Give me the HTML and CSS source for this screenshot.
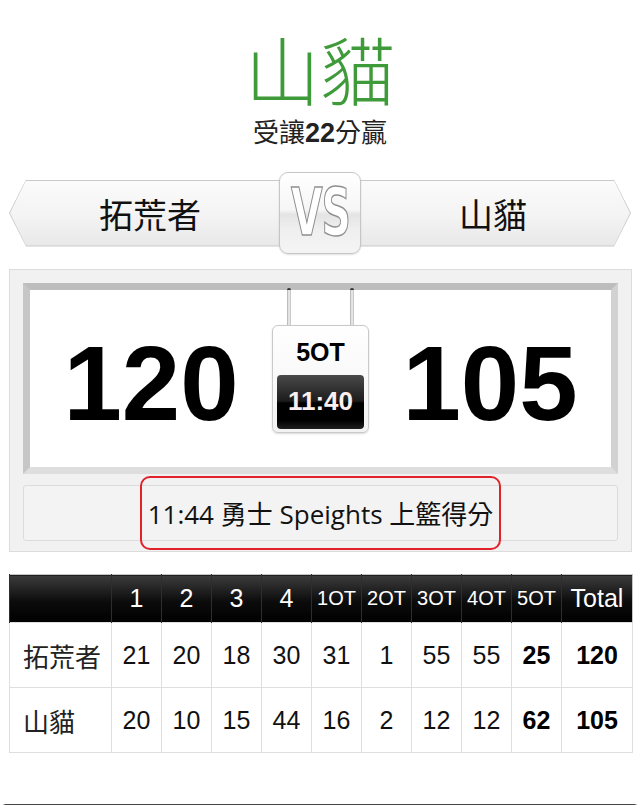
FILE: index.html
```html
<!DOCTYPE html>
<html lang="zh-tw">
<head>
    <meta charset="utf-8">
    <meta name="viewport" content="width=device-width, initial-scale=1.0">
    <title>拓荒者 vs 山貓</title>
    <link rel="stylesheet" href="styles.css">
</head>
<body>
    <div class="winner">
        <div class="winner-name">山貓</div>
        <div class="winner-note">受讓<b>22</b>分贏</div>
    </div>

    <div class="teams">
        <div class="team team-away"><div class="team-face">拓荒者</div></div>
        <div class="vs"><span>VS</span></div>
        <div class="team team-home"><div class="team-face">山貓</div></div>
    </div>

    <div class="board">
        <div class="board-frame">
            <div class="score">120</div>
            <div class="clock">
                <div class="clock-period">5OT</div>
                <div class="clock-time">11:40</div>
            </div>
            <div class="score">105</div>
        </div>
        <div class="play"><span class="play-text">11:44 勇士 Speights 上籃得分</span></div>
    </div>

    <table class="linescore">
        <colgroup>
            <col class="col-name">
            <col span="9" class="col-q">
            <col class="col-total">
        </colgroup>
        <thead>
            <tr>
                <th></th>
                <th>1</th><th>2</th><th>3</th><th>4</th>
                <th class="ot">1OT</th><th class="ot">2OT</th><th class="ot">3OT</th><th class="ot">4OT</th><th class="ot">5OT</th>
                <th>Total</th>
            </tr>
        </thead>
        <tbody>
            <tr>
                <td class="name">拓荒者</td>
                <td>21</td><td>20</td><td>18</td><td>30</td>
                <td>31</td><td>1</td><td>55</td><td>55</td>
                <td class="hot">25</td><td class="hot">120</td>
            </tr>
            <tr>
                <td class="name">山貓</td>
                <td>20</td><td>10</td><td>15</td><td>44</td>
                <td>16</td><td>2</td><td>12</td><td>12</td>
                <td class="hot">62</td><td class="hot">105</td>
            </tr>
        </tbody>
    </table>

    <div class="dock"></div>
</body>
</html>
```

FILE: styles.css
```css
body {
    margin: 0;
    padding: 0;
    background-color: #fff;
    font-family: "Liberation Sans", "Noto Sans CJK TC", sans-serif;
    color: #111;
    overflow: hidden;
}

/* 贏家 */
.winner {
    padding-top: 30px;
    text-align: center;
}

.winner-name {
    font-family: "Noto Sans CJK TC", sans-serif;
    font-size: 75px;
    font-weight: 300;
    line-height: 76px;
    color: #3f9b3a;
}

.winner-note {
    margin-top: 12px;
    font-family: "Noto Sans CJK TC", sans-serif;
    font-size: 26px;
    line-height: 26px;
    color: #222;
}

.winner-note b {
    font-family: "Liberation Sans", sans-serif;
    font-size: 27px;
}

/* 對戰 */
.teams {
    display: flex;
    align-items: center;
    margin: 26px 9px 0 9px;
}

.team {
    flex: 1;
    height: 67px;
    padding: 1px;
    box-sizing: border-box;
    background-color: #c9c9c9;
}

.team-face {
    height: 100%;
    display: flex;
    align-items: center;
    justify-content: center;
    font-family: "Noto Sans CJK TC", sans-serif;
    font-size: 34px;
    color: #111;
    background: linear-gradient(#fbfbfb, #f3f3f3 55%, #e8e8e8);
}

.team-away {
    clip-path: polygon(17px 0, 100% 0, 100% 100%, 17px 100%, 0 50%);
}

.team-away .team-face {
    clip-path: polygon(16px 0, 100% 0, 100% 100%, 16px 100%, 0 50%);
    padding-left: 6px;
}

.team-home {
    clip-path: polygon(0 0, calc(100% - 17px) 0, 100% 50%, calc(100% - 17px) 100%, 0 100%);
}

.team-home .team-face {
    clip-path: polygon(0 0, calc(100% - 16px) 0, 100% 50%, calc(100% - 16px) 100%, 0 100%);
}

.vs {
    position: relative;
    z-index: 1;
    width: 82px;
    height: 82px;
    margin: 0 -6px;
    box-sizing: border-box;
    border: 1px solid #c6c6c6;
    border-radius: 9px;
    background: linear-gradient(#ffffff, #f6f6f6 46%, #e4e4e4 52%, #efefef 70%, #f4f4f4);
    box-shadow: 0 1px 2px rgba(0, 0, 0, 0.12);
    display: flex;
    align-items: center;
    justify-content: center;
}

.vs span {
    display: inline-block;
    font-family: "DejaVu Sans", sans-serif;
    font-weight: bold;
    font-size: 66px;
    line-height: 1;
    letter-spacing: -2px;
    color: #fff;
    -webkit-text-stroke: 1.5px #8f8f8f;
    transform: scaleX(0.62);
}

/* 比分板 */
.board {
    margin: 15px 8px 0 9px;
    padding: 13px 13px 10px;
    border: 1px solid #dcdcdc;
    background-color: #f1f1f1;
}

.board-frame {
    height: 177px;
    display: flex;
    align-items: center;
    background-color: #fff;
    border-style: solid;
    border-width: 7px;
    border-color: #bdbdbd #d2d2d2 #dedede #c6c6c6;
}

.score {
    flex: 1;
    padding-top: 9px;
    text-align: center;
    font-size: 105px;
    font-weight: bold;
    line-height: 1;
    color: #000;
}

.clock {
    position: relative;
    width: 97px;
    height: 108px;
    box-sizing: border-box;
    padding: 0 4px 3px;
    border: 1px solid #c9c9c9;
    border-radius: 6px;
    background: linear-gradient(#ffffff, #f2f2f2);
    box-shadow: 0 1px 2px rgba(0, 0, 0, 0.15);
    display: flex;
    flex-direction: column;
}

.clock::before,
.clock::after {
    content: "";
    position: absolute;
    top: -38px;
    width: 4px;
    height: 35px;
    border-top: 2px solid #333;
    border-radius: 3px 3px 0 0;
    background: linear-gradient(90deg, #aaa, #f4f4f4 50%, #bbb);
}

.clock::before {
    left: 14px;
}

.clock::after {
    right: 14px;
}

.clock-period {
    flex: 1;
    padding-top: 5px;
    display: flex;
    align-items: center;
    justify-content: center;
    font-size: 25px;
    font-weight: bold;
    color: #000;
}

.clock-time {
    height: 54px;
    border-radius: 4px;
    background: linear-gradient(#4a4a4a, #1c1c1c 48%, #000 52%, #000 84%, #1e1e1e);
    display: flex;
    align-items: center;
    justify-content: center;
    font-size: 26px;
    font-weight: bold;
    color: #fcefef;
}

.play {
    height: 54px;
    margin-top: 11px;
    border: 1px solid #dcdcdc;
    border-radius: 3px;
    background-color: #f3f3f3;
    display: flex;
    align-items: center;
    justify-content: center;
}

.play-text {
    height: 74px;
    padding: 0 6px;
    box-sizing: border-box;
    border: 2px solid #e2222b;
    border-radius: 10px;
    display: flex;
    align-items: center;
    font-family: "Open Sans", "Noto Sans CJK TC", sans-serif;
    font-size: 26px;
    color: #111;
}

/* 各節比分 */
.linescore {
    width: 623px;
    margin: 22px 0 0 9px;
    border-collapse: collapse;
    table-layout: fixed;
    border: 1px solid #c4c4c4;
}

.col-name {
    width: 102px;
}

.col-q {
    width: 50px;
}

.col-total {
    width: 71px;
}

.linescore th {
    height: 47px;
    padding: 0;
    font-size: 25px;
    font-weight: normal;
    color: #fff;
    background: linear-gradient(#3c3c3c, #0c0c0c 55%, #000);
    border-left: 1px solid #2e2e2e;
}

.linescore th.ot {
    font-size: 20px;
}

.linescore td {
    height: 64px;
    padding: 0;
    text-align: center;
    font-size: 25px;
    color: #111;
    border: 1px solid #dedede;
}

.linescore td.name {
    padding-left: 13px;
    text-align: left;
    font-family: "Noto Sans CJK TC", sans-serif;
    font-size: 26px;
    color: #222;
}

.linescore td.hot {
    font-weight: bold;
    color: #000;
}

.dock {
    height: 30px;
    margin-top: 51px;
    border: 2px solid #444;
    border-bottom: none;
    border-radius: 6px 6px 0 0;
}
```
